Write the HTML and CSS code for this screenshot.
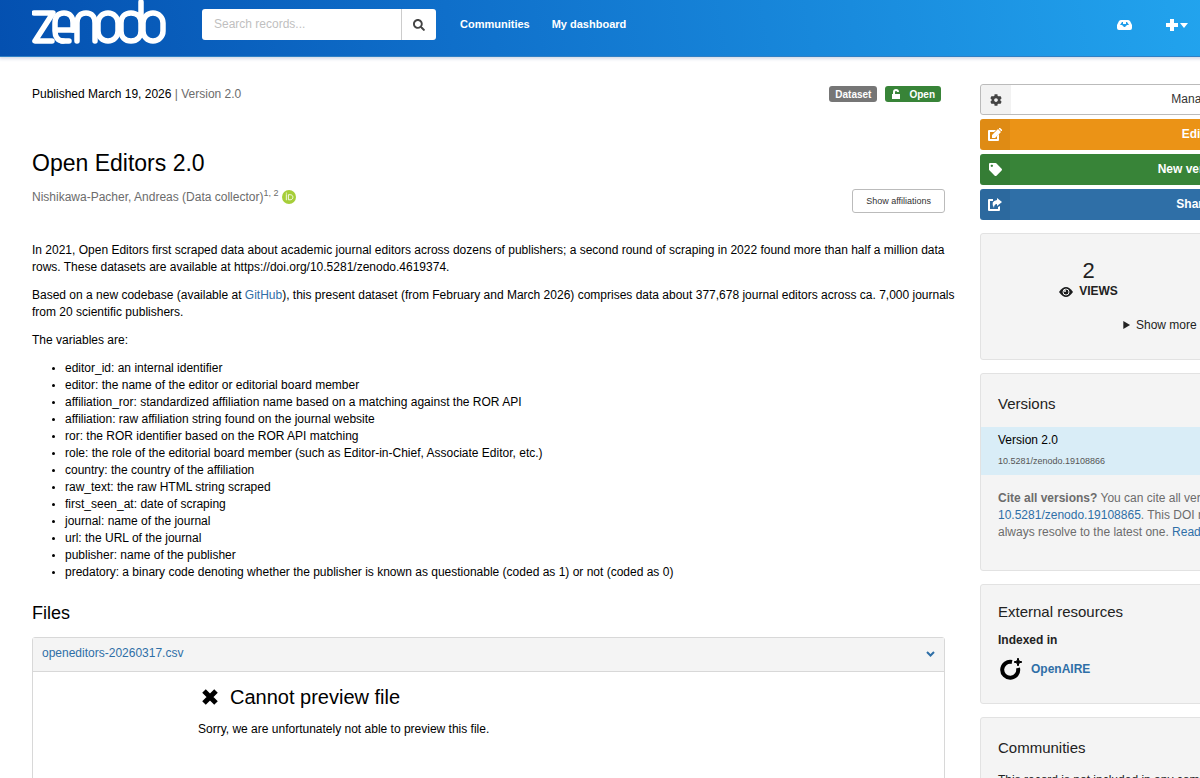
FILE: index.html
```html
<!DOCTYPE html>
<html lang="en">

<head>
    <meta charset="utf-8">
    <title>Open Editors 2.0</title>
    <link rel="stylesheet" href="styles.css">
</head>

<body>
    <div class="page">
        <header class="navbar">
            <a class="logo" href="#" aria-label="Zenodo">
                <svg width="136" height="46" viewBox="0 0 136 46" fill="none" stroke="#fff" stroke-width="5.500" stroke-linecap="round" stroke-linejoin="round">
                    <path d="M2 13H21L3 41H20" />
                    <path d="M31 41C26 41 23 37 23 31V23C23 17 26 13 32 13S41 17 41 23V30H25" />
                    <path d="M30 41H37M45 30V41M41 30H45V23C45 17 48 13 54 13S63 17 63 23V41" />
                    <rect x="66" y="13" width="20" height="28" rx="10" />
                    <path d="M109 2V31C109 37 105 41 99 41S89 37 89 31V23C89 17 93 13 99 13S109 17 109 23" />
                    <rect x="111" y="13" width="20" height="28" rx="10" />
                </svg>
            </a>
            <form class="search">
                <input type="text" aria-label="Search records" placeholder="Search records...">
                <button type="button" aria-label="Search">
                    <svg width="12" height="12" viewBox="0 0 512 512" fill="#444"><path d="M505 442.700L405.300 343c-4.500-4.500-10.600-7-17-7H372c27.600-35.300 44-79.700 44-128C416 93.100 322.900 0 208 0S0 93.100 0 208s93.100 208 208 208c48.300 0 92.700-16.400 128-44v16.300c0 6.400 2.500 12.500 7 17l99.700 99.700c9.400 9.400 24.600 9.400 33.900 0l28.300-28.300c9.400-9.400 9.400-24.600.1-34zM208 336c-70.700 0-128-57.200-128-128 0-70.700 57.200-128 128-128 70.700 0 128 57.200 128 128 0 70.700-57.200 128-128 128z" /></svg>
                </button>
            </form>
            <nav class="links">
                <a href="#">Communities</a>
                <a href="#">My dashboard</a>
            </nav>
            <div class="actions">
                <a href="#" aria-label="Inbox">
                    <svg width="15" height="12" viewBox="0 0 15 12" fill="#fff"><path fill-rule="evenodd" d="M4 1H11Q12 1 13 2L15 6V9Q15 11 13 11H2Q0 11 0 9V6L2 2Q3 1 4 1ZM5 3L3 6H5L7 8H8L10 6H12L10 3Z" /><rect x="6" y="3" width="3" height="2" /></svg>
                </a>
                <button type="button" aria-label="New">
                    <svg width="22" height="12" viewBox="0 0 22 12" fill="#fff"><path d="M4 0H8V4H12V8H8V12H4V8H0V4H4ZM14 4H22L18 9Z" /></svg>
                </button>
            </div>
        </header>

        <div class="container">
            <main>
                <div class="meta">
                    <div>Published March 19, 2026 <span class="muted">| Version 2.0</span></div>
                    <div class="labels">
                        <span class="label">Dataset</span>
                        <span class="label open">
                            <svg width="10" height="10" viewBox="0 0 10 10" fill="#fff"><path d="M2 5V3Q2 0 5 0T8 3H6Q6 2 5 2T4 3V5H9V10H1V5Z" /></svg>
                            Open
                        </span>
                    </div>
                </div>

                <h1>Open Editors 2.0</h1>
                <div class="creators">
                    <div class="muted">Nishikawa-Pacher, Andreas (Data collector)<sup>1, 2</sup>
                        <svg class="orcid" width="14" height="14" viewBox="0 0 256 256"><circle cx="128" cy="128" r="128" fill="#a6ce39" /><path fill="#fff" d="M71 79h15v107H71z" /><path fill="none" stroke="#fff" stroke-width="16" d="M117 86h33c34 0 49 23 49 47 0 25-18 46-49 46h-33z" /><circle cx="79" cy="57" r="10" fill="#fff" /></svg>
                    </div>
                    <button class="small-button" type="button">Show affiliations</button>
                </div>

                <div class="description">
                    <p>In 2021, Open Editors first scraped data about academic journal editors across dozens of publishers; a second round of scraping in 2022 found more than half a million data rows. These datasets are available at https://doi.org/10.5281/zenodo.4619374.</p>
                    <p>Based on a new codebase (available at <a href="#">GitHub</a>), this present dataset (from February and March 2026) comprises data about 377,678 journal editors across ca. 7,000 journals from 20 scientific publishers.</p>
                    <p>The variables are:</p>
                    <ul>
                        <li>editor_id: an internal identifier</li>
                        <li>editor: the name of the editor or editorial board member</li>
                        <li>affiliation_ror: standardized affiliation name based on a matching against the ROR API</li>
                        <li>affiliation: raw affiliation string found on the journal website</li>
                        <li>ror: the ROR identifier based on the ROR API matching</li>
                        <li>role: the role of the editorial board member (such as Editor-in-Chief, Associate Editor, etc.)</li>
                        <li>country: the country of the affiliation</li>
                        <li>raw_text: the raw HTML string scraped</li>
                        <li>first_seen_at: date of scraping</li>
                        <li>journal: name of the journal</li>
                        <li>url: the URL of the journal</li>
                        <li>publisher: name of the publisher</li>
                        <li>predatory: a binary code denoting whether the publisher is known as questionable (coded as 1) or not (coded as 0)</li>
                    </ul>
                </div>

                <h2>Files</h2>
                <section class="files">
                    <div class="file-header">
                        <a href="#">openeditors-20260317.csv</a>
                        <svg width="9" height="6" viewBox="0 0 9 6" fill="none" stroke="#2f6fa7" stroke-width="2"><path d="M1 1L4.500 4.500L8 1" /></svg>
                    </div>
                    <div class="preview">
                        <h3>
                            <svg width="16" height="16" viewBox="0 0 16 16" stroke="#000" stroke-width="5"><path d="M2 2L14 14M14 2L2 14" /></svg>
                            Cannot preview file
                        </h3>
                        <p>Sorry, we are unfortunately not able to preview this file.</p>
                    </div>
                </section>
            </main>

            <aside>
                <div class="buttons">
                    <button class="manage" type="button">
                        <span class="icon"><svg width="12" height="12" viewBox="0 0 512 512" fill="#444"><path d="M487.400 315.700l-42.600-24.600c4.300-23.200 4.300-47 0-70.200l42.600-24.600c4.900-2.800 7.100-8.600 5.500-14-11.100-35.600-30-67.800-54.700-94.600-3.800-4.100-10-5.100-14.800-2.300L380.800 110c-17.900-15.400-38.500-27.300-60.800-35.100V25.800c0-5.600-3.900-10.500-9.400-11.700-36.700-8.200-74.300-7.800-109.200 0-5.500 1.200-9.400 6.100-9.400 11.700V75c-22.200 7.900-42.800 19.800-60.800 35.100L88.700 85.500c-4.900-2.800-11-1.900-14.800 2.300-24.700 26.700-43.600 58.900-54.700 94.600-1.700 5.400.6 11.200 5.500 14L67.300 221c-4.300 23.200-4.300 47 0 70.200l-42.600 24.600c-4.900 2.800-7.100 8.600-5.500 14 11.100 35.600 30 67.800 54.700 94.600 3.800 4.100 10 5.100 14.800 2.300l42.600-24.600c17.900 15.400 38.500 27.300 60.800 35.100v49.200c0 5.600 3.900 10.500 9.400 11.700 36.700 8.200 74.300 7.800 109.200 0 5.500-1.200 9.400-6.100 9.400-11.700v-49.200c22.200-7.900 42.800-19.800 60.800-35.100l42.600 24.600c4.900 2.800 11 1.900 14.800-2.300 24.700-26.700 43.600-58.900 54.700-94.600 1.500-5.500-.7-11.300-5.600-14.100zM256 336c-44.100 0-80-35.900-80-80s35.900-80 80-80 80 35.900 80 80-35.900 80-80 80z" /></svg></span>
                        Manage
                    </button>
                    <button class="edit" type="button">
                        <span class="icon"><svg width="14" height="13" viewBox="0 0 14 13" fill="#fff"><path fill-rule="evenodd" d="M1 2H8L6 4H2V11H9V8L11 6V12Q11 13 10 13H1Q0 13 0 12V3Q0 2 1 2Z" /><path d="M10 1L13 4L7 10L4 10L4 7ZM11 0Q12 -1 13 1Q15 2 14 3L13 3L11 1Z" /></svg></span>
                        Edit
                    </button>
                    <button class="version" type="button">
                        <span class="icon"><svg width="13" height="13" viewBox="0 0 512 512" fill="#fff"><path d="M0 252.100V48C0 21.500 21.500 0 48 0h204.100a48 48 0 0 1 33.900 14.100l211.900 211.900c18.700 18.700 18.700 49.100 0 67.900L293.800 497.900c-18.700 18.700-49.100 18.700-67.900 0L14.100 286.100A48 48 0 0 1 0 252.100zM112 64c-26.500 0-48 21.500-48 48s21.500 48 48 48 48-21.500 48-48-21.500-48-48-48z" /></svg></span>
                        New version
                    </button>
                    <button class="share" type="button">
                        <span class="icon"><svg width="14" height="13" viewBox="0 0 14 13" fill="#fff"><path d="M1 1H5V3H2V11H10V9L12 8V12Q12 13 11 13H1Q0 13 0 12V2Q0 1 1 1Z" /><path d="M9 0L14 4L9 8V6Q6 6 6 10Q2 3 9 2Z" /></svg></span>
                        Share
                    </button>
                </div>

                <section class="card stats">
                    <div class="stat">
                        <div class="number">2</div>
                        <div class="caption">
                            <svg width="14" height="12" viewBox="0 0 14 10" fill="none"><path fill="#1b1c1d" d="M0 5Q7 -5 14 5Q7 15 0 5Z" /><circle cx="7" cy="5" r="3" stroke="#f4f4f4" /><circle cx="6" cy="4" r="1" fill="#f4f4f4" /></svg>
                            VIEWS
                        </div>
                    </div>
                    <details>
                        <summary>Show more details</summary>
                    </details>
                </section>

                <section class="card versions">
                    <h2>Versions</h2>
                    <div class="current">
                        <div>Version 2.0</div>
                        <small>10.5281/zenodo.19108866</small>
                    </div>
                    <p class="muted"><strong>Cite all versions?</strong> You can cite all versions by using the DOI <a href="#">10.5281/zenodo.19108865</a>. This DOI represents all versions, and will always resolve to the latest one. <a href="#">Read more</a>.</p>
                </section>

                <section class="card resources">
                    <h2>External resources</h2>
                    <h3>Indexed in</h3>
                    <a class="openaire" href="#">
                        <svg width="22" height="22" viewBox="0 0 22 22"><path d="M12 4A8 8 0 1 0 18 10" fill="none" stroke="#000" stroke-width="4" /><path d="M18 0L19 3L22 4L19 5L18 8L17 5L14 4L17 3Z" stroke="#000" stroke-width="1" /></svg>
                        OpenAIRE
                    </a>
                </section>

                <section class="card communities">
                    <h2>Communities</h2>
                    <p>This record is not included in any communities yet.</p>
                </section>
            </aside>
        </div>
    </div>
</body>

</html>
```
FILE: styles.css
```css
* {
    box-sizing: border-box;
}

body {
    margin: 0;
    height: 100vh;
    overflow: hidden;
    font-family: Arial, "Liberation Sans", sans-serif;
    font-size: 12px;
    line-height: 17px;
    color: #000;
}

a {
    color: #2f6fa7;
    text-decoration: none;
}

h1, h2, h3, p {
    margin: 0;
    font-weight: normal;
}

button {
    font: inherit;
    cursor: pointer;
}

svg {
    flex: none;
}

.muted {
    color: #6c6c6c;
}

/* wider than small windows, the sidebar runs off the right edge */
.page {
    min-width: 1410px;
}

.navbar {
    display: flex;
    align-items: center;
    height: 57px;
    padding: 0 32px 7px;
    background-image: linear-gradient(80deg, #0450b0, #0f6fca 32%, #22a4ee 86%);
    border-bottom: 1px solid #2f7fc4;
    box-shadow: 0 1px 3px 1px #d5dbe8;
}

.logo {
    display: flex;
    align-self: flex-start;
    margin-right: 34px;
}

.search {
    display: flex;
    height: 31px;
    width: 234px;
    margin-right: 24px;
}

.search input {
    flex: 1;
    min-width: 0;
    padding: 0 12px;
    border: 0;
    border-radius: 3px 0 0 3px;
    font: inherit;
}

.search input::placeholder {
    color: #bfbfbf;
}

.search button {
    display: flex;
    align-items: center;
    justify-content: center;
    width: 35px;
    padding: 0;
    border: 0;
    border-left: 1px solid #ccc;
    border-radius: 0 3px 3px 0;
    background-color: #fff;
}

.links {
    display: flex;
    gap: 22px;
}

.links a {
    color: #fff;
    font-size: 11px;
    font-weight: bold;
}

.actions {
    display: flex;
    align-items: center;
    gap: 34px;
    margin-left: auto;
    margin-right: 190px;
}

.actions a, .actions button {
    display: flex;
}

.actions button {
    padding: 0;
    border: 0;
    background: none;
}

.container {
    display: grid;
    grid-template-columns: 1fr 398px;
    gap: 35px;
    padding: 27px 32px;
}

.meta {
    display: flex;
    justify-content: space-between;
    padding: 2px 4px 0 0;
}

.labels {
    display: flex;
    gap: 8px;
}

.label {
    display: flex;
    align-items: center;
    gap: 8px;
    height: 16px;
    padding: 0 6px;
    border-radius: 3px;
    background-color: #767676;
    color: #fff;
    font-size: 10px;
    font-weight: bold;
}

.open {
    background-color: #388438;
}

h1 {
    margin-top: 44px;
    font-size: 23px;
    line-height: 32px;
}

.creators {
    display: flex;
    justify-content: space-between;
    margin-top: 10px;
}

sup {
    font-size: 9px;
    line-height: 0;
}

.orcid {
    vertical-align: -3px;
}

.small-button {
    height: 24px;
    padding: 0 13px;
    border: 1px solid #bbb;
    border-radius: 3px;
    background-color: #fff;
    font-size: 9px;
    color: #333;
}

.description {
    margin: 29px -20px 0 0;
}

.description p {
    margin-bottom: 11px;
}

.description ul {
    margin: 0;
    padding-left: 33px;
}

.description li::marker {
    font-size: 10px;
}

h2 {
    font-size: 18px;
    line-height: 24px;
}

main h2 {
    margin-top: 20px;
}

.files {
    height: 200px;
    margin-top: 12px;
    border: 1px solid #d8d8d8;
    border-radius: 3px 3px 0 0;
}

.file-header {
    display: flex;
    align-items: center;
    justify-content: space-between;
    height: 34px;
    padding: 0 9px 2px;
    border-bottom: 1px solid #d8d8d8;
    background-color: #f4f4f4;
}

.preview {
    padding: 11px 165px;
}

.preview h3 {
    display: flex;
    align-items: center;
    gap: 12px;
    padding-left: 4px;
    font-size: 20px;
    line-height: 28px;
}

.preview p {
    margin-top: 10px;
}

.buttons {
    display: grid;
    gap: 4px;
}

.buttons button {
    position: relative;
    height: 31px;
    padding: 0 0 0 28px;
    border: 0;
    border-radius: 3px;
    color: #fff;
    font-weight: bold;
}

.icon {
    position: absolute;
    top: 0;
    bottom: 0;
    left: 0;
    display: flex;
    align-items: center;
    justify-content: center;
    width: 30px;
    border-radius: 3px 0 0 3px;
    background-color: rgba(0, 0, 0, 0.05);
}

.buttons .manage {
    border: 1px solid #bbb;
    background-color: #fff;
    color: #333;
    font-weight: normal;
}

.edit {
    background-color: #eb9316;
}

.version {
    background-color: #388438;
}

.share {
    background-color: #2f6fa7;
}

.card {
    margin-top: 13px;
    padding: 17px;
    border: 1px solid #e2e2e2;
    border-radius: 3px;
    background-color: #f4f4f4;
    color: #222;
}

.stats {
    height: 127px;
}

.stat {
    width: 50%;
    padding-top: 8px;
    text-align: center;
}

.number {
    font-size: 22px;
    line-height: 24px;
}

.caption {
    display: flex;
    align-items: center;
    justify-content: center;
    gap: 6px;
    font-weight: bold;
}

details {
    margin-top: 17px;
    text-align: center;
}

.card h2 {
    font-size: 15px;
    line-height: 20px;
}

.versions {
    height: 198px;
    padding-top: 20px;
}

.current {
    margin: 13px -17px 0;
    padding: 5px 17px;
    background-color: #d9edf7;
    color: #000;
}

.current small {
    display: block;
    margin-top: 4px;
    font-size: 9px;
    color: #555;
}

.versions p {
    margin: 15px -16px 0 0;
}

.resources {
    height: 120px;
}

.resources h3 {
    margin-top: 10px;
    font-size: 12px;
    font-weight: bold;
}

.openaire {
    display: flex;
    align-items: center;
    gap: 9px;
    margin: 9px 0 0 2px;
    font-weight: bold;
}

.communities {
    padding-top: 20px;
}

.communities p {
    margin-top: 14px;
}
```
